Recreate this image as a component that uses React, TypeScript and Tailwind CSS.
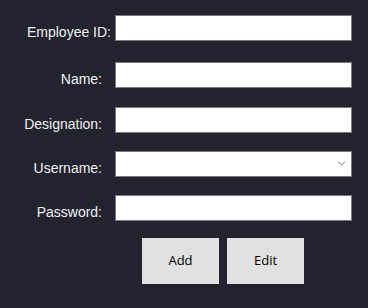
import { ChevronDown } from 'lucide-react';

const labelFont = { fontFamily: '"Liberation Sans", Arial, sans-serif' };

function Row({ label, top, pr, select }: { label: string; top: string; pr: string; select?: boolean }) {
  return (
    <div className={`flex items-start h-[26px] ${top}`}>
      <div className={`w-[115px] h-[26px] shrink-0 text-right text-[14px] leading-[16px] text-[#f0f0f0] pt-[9px] ${pr}`} style={labelFont}>
        {label}
      </div>
      {select ? (
        <div className="relative w-[237px] h-[26px] bg-white border border-[#7a7a7a]">
          <ChevronDown className="absolute right-[3px] top-[5px] w-[13px] h-[13px] text-[#555]" strokeWidth={1.5} />
        </div>
      ) : (
        <div className="w-[237px] h-[26px] bg-white border border-[#7a7a7a]" />
      )}
    </div>
  );
}

export default function App() {
  return (
    <div className="w-[368px] h-[308px] bg-[#22232f] pt-[15px] overflow-hidden">
      <Row label="Employee ID:" top="" pr="pr-[4px]" />
      <Row label="Name:" top="mt-[21px]" pr="pr-[13px]" />
      <Row label="Designation:" top="mt-[19px]" pr="pr-[13px]" />
      <Row label="Username:" top="mt-[18px]" pr="pr-[13px]" select />
      <Row label="Password:" top="mt-[18px]" pr="pr-[13px]" />
      <div className="flex gap-[8px] pl-[142px] mt-[17px]" style={{ fontFamily: '"Open Sans", "Noto Sans", sans-serif' }}>
        <button className="w-[77px] h-[46px] bg-[#e1e1e1] text-[13px] text-black">Add</button>
        <button className="w-[77px] h-[46px] bg-[#e1e1e1] text-[13px] text-black">Edit</button>
      </div>
    </div>
  );
}
